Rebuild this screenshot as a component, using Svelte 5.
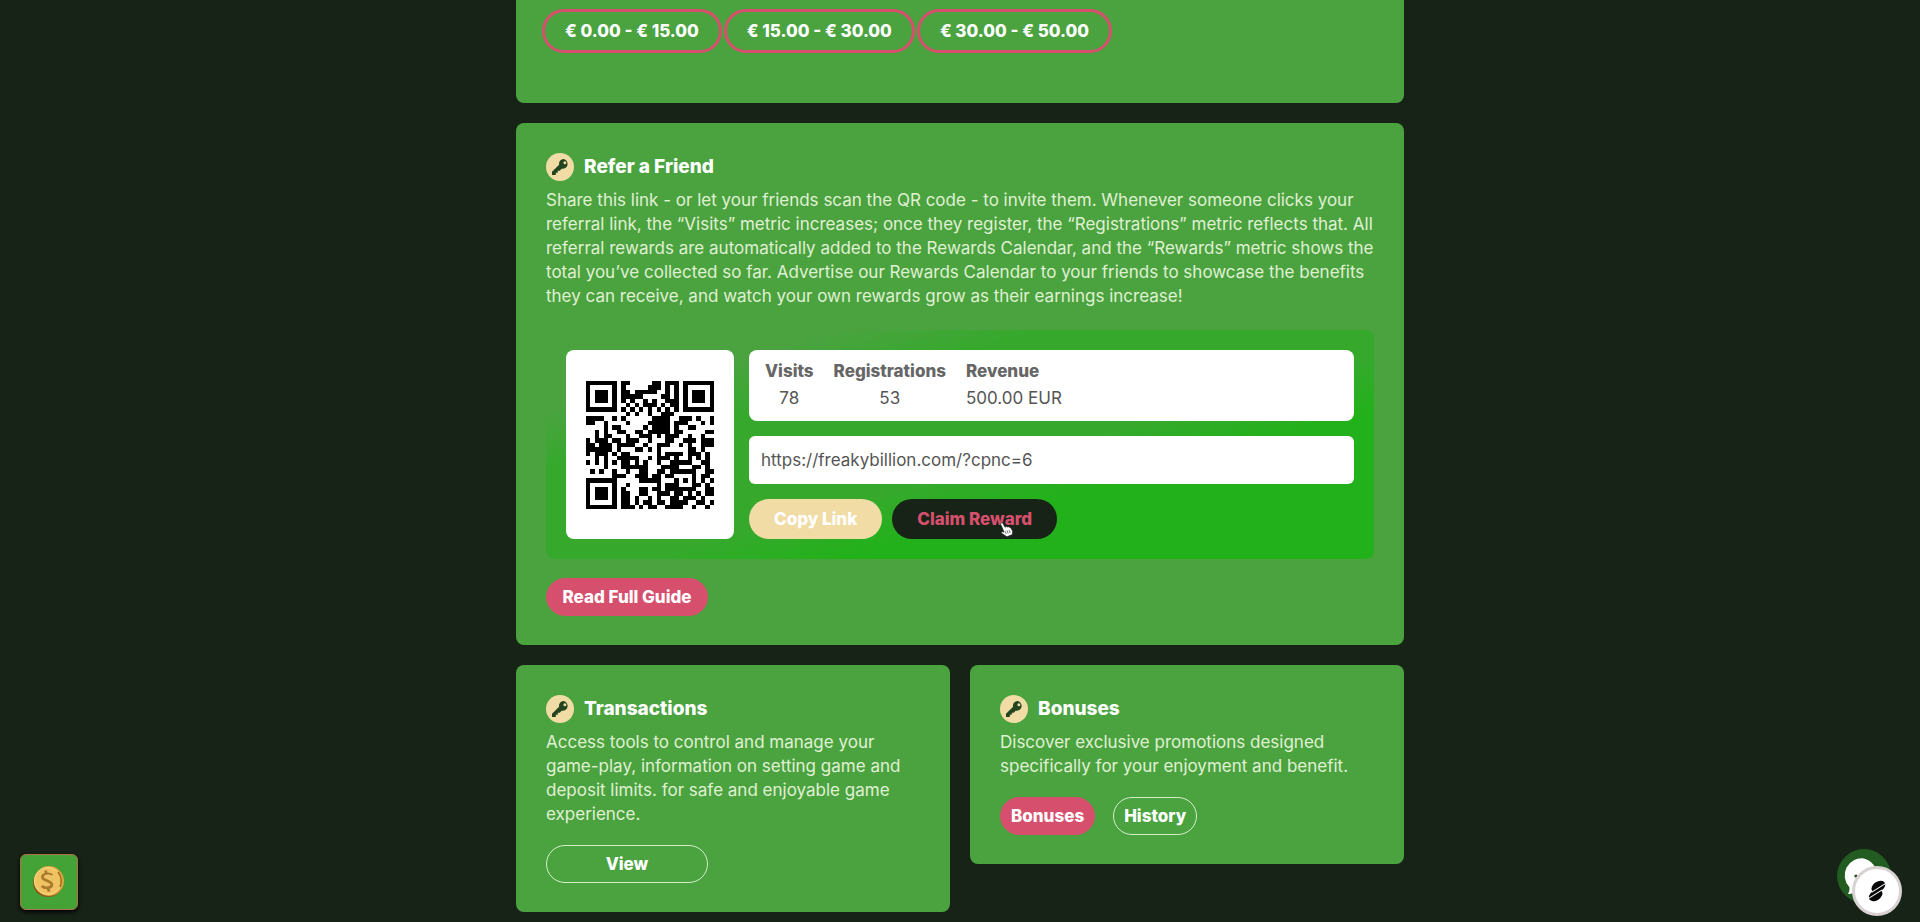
<script>
  const ranges = ['€ 0.00 - € 15.00', '€ 15.00 - € 30.00', '€ 30.00 - € 50.00'];
  let link = $state('https://freakybillion.com/?cpnc=6');

  const modules = [
    'XXXXXXX.XX.....XX.XXX.XXXXXXX',
    'X.....X.X.....XXX.X.X.X.....X',
    'X.XXX.X.XX.XXXXX..X.X.X.XXX.X',
    'X.XXX.X.XXXXX....XX.X.X.XXX.X',
    'X.XXX.X.X.X..X.X..XXX.X.XXX.X',
    'X.....X..X.X.XXX.X.XX.X.....X',
    'XXXXXXX.X.X.X.X.X.X.X.XXXXXXX',
    '.........X.X..X..XXX.........',
    'XXXX..X.X......XXXX..XXX.X..X',
    'XX..X....X....XXXXX.XXX...X.X',
    '....X.XX.....X.XXXX.X..XX....',
    '..X.X..XX..XX.XXXXX.XX.....XX',
    '..X.XX...X..XXX.X.XXX..X..X..',
    'X.XXX.XX.XXX..X...XX..XXX.XXX',
    'XX.XXX.XXXX..X..XXX..X.X..XXX',
    'XXXXXX.X...XX.X.X......XX.X..',
    'X.XXX.X.XX......X.XXXX.XXX.X.',
    '..X.X..XXXXX..X.XXX.X..X.X.X.',
    'X.X.X.X.XX.X.X..X..XXXXX..XX.',
    '....X...XXXXXX...XXXX...XX.X.',
    '.X.X..X..X..XX..XX.XXXXXX..XX',
    '......XXX..XXX.XX.XX....X.XX.',
    'XXXXXXX.....XXXXX...X.X.X.X.X',
    'X.....X..X......X.XXX...XX.X.',
    'X.XXX.X.X...XX.XX.XXXXXXX..XX',
    'X.XXX.X.XX..XX..XXX.XX.X.X.XX',
    'X.XXX.X.XX.X..X.X..XX.XXX.X..',
    'X.....X.XX.X.XX.XX.XXXX..XX.X',
    'XXXXXXX.XXX.X.XX..XXXX..X..X.',
  ];
  const qrPath = modules
    .flatMap((row, y) => [...row].map((cell, x) => (cell === 'X' ? `M${x} ${y}h1v1h-1z` : '')))
    .join('');
</script>

{#snippet heading(text)}
  <h2>
    <svg class="key" viewBox="0 0 28 28" aria-hidden="true">
      <circle cx="14" cy="14" r="14" fill="#f0dca4" />
      <path
        fill="#22451f"
        fill-rule="evenodd"
        d="M17.7 6a4.7 4.7 0 0 0-4.600 5.800L6 18.700V22h3.800v-2.200h2v-2.100h2l1.800-2a4.800 4.800 0 1 0 2.100-9.700zm1.200 2.200a1.500 1.500 0 1 1 0 3 1.500 1.500 0 0 1 0-3z"
      />
    </svg>
    {text}
  </h2>
{/snippet}

<main>
  <section class="card ranges">
    {#each ranges as range}
      <button class="range">{range}</button>
    {/each}
  </section>

  <section class="card">
    {@render heading('Refer a Friend')}
    <p>
      Share this link - or let your friends scan the QR code - to invite them. Whenever someone clicks your<br />
      referral link, the “Visits” metric increases; once they register, the “Registrations” metric reflects that. All<br />
      referral rewards are automatically added to the Rewards Calendar, and the “Rewards” metric shows the<br />
      total you’ve collected so far. Advertise our Rewards Calendar to your friends to showcase the benefits<br />
      they can receive, and watch your own rewards grow as their earnings increase!
    </p>

    <div class="panel">
      <div class="qr">
        <svg viewBox="0 0 29 29" role="img" aria-label="QR code" shape-rendering="crispEdges">
          <path d={qrPath} fill="#000" />
        </svg>
      </div>
      <div class="details">
        <div class="stats">
          <table>
            <thead>
              <tr><th scope="col">Visits</th><th scope="col">Registrations</th><th scope="col">Revenue</th></tr>
            </thead>
            <tbody>
              <tr><td>78</td><td>53</td><td>500.00 EUR</td></tr>
            </tbody>
          </table>
        </div>
        <input type="text" aria-label="Referral link" bind:value={link} />
        <div class="actions">
          <button class="copy">Copy Link</button>
          <button class="claim">
            Claim Reward
            <svg class="pointer" viewBox="0 0 14 16" aria-hidden="true">
              <path
                d="M1.200 1c.7-.5 1.500-.1 1.900.6l2 3.600.9-.6c.6-.3 1.200 0 1.500.4.6-.5 1.300-.3 1.700.3.6-.3 1.300 0 1.600.6l1.900 3.300-.3 3.400-5.500 2.200-5.300-3.600c-.7-.6-.1-1.800 1-1.500l1.500.4L.7 2.500C.4 1.900.7 1.300 1.200 1z"
                fill="#fff" stroke="#222" stroke-width=".7"
              />
              <path d="M7 8.400l1.200 3M9 7.900l1.200 3M5.200 9.200l1 2.600" stroke="#333" stroke-width=".7" />
            </svg>
          </button>
        </div>
      </div>
    </div>

    <div class="row"><button class="pink wide">Read Full Guide</button></div>
  </section>

  <div class="pair">
    <section class="card">
      {@render heading('Transactions')}
      <p>
        Access tools to control and manage your<br />
        game-play, information on setting game and<br />
        deposit limits. for safe and enjoyable game<br />
        experience.
      </p>
      <div class="row"><button class="outline wide">View</button></div>
    </section>
    <section class="card">
      {@render heading('Bonuses')}
      <p>
        Discover exclusive promotions designed<br />
        specifically for your enjoyment and benefit.
      </p>
      <div class="row"><button class="pink">Bonuses</button><button class="outline">History</button></div>
    </section>
  </div>
</main>

<button class="coin" aria-label="Coins">
  <svg viewBox="0 0 34 34" aria-hidden="true">
    <ellipse cx="16" cy="18" rx="15" ry="14" fill="#8a5a1c" />
    <circle cx="17" cy="16" r="15" fill="#dfa53a" />
    <circle cx="16" cy="16" r="13.600" fill="#efc362" stroke="#f8dc8c" />
    <path d="M26 7a15 15 0 0 1 2 15" fill="none" stroke="#9c6a22" stroke-width="1.500" />
    <path
      d="M20 10.500c-2.400-2.600-8.600-2-9.500 1-1 4.600 9.800 3.800 9.400 8.300-.5 3.800-7.600 3.900-10 1M13.600 5.500l.7 3M16.200 23.500l.8 3.200"
      fill="none" stroke="#a87a2c" stroke-width="2.800"
    />
    <path d="M20 11.500c-2.600-2.300-7.400-1.800-8 .8" fill="none" stroke="#f6d880" />
  </svg>
</button>

<button class="chat" aria-label="Open chat">
  <svg viewBox="0 0 54 54" aria-hidden="true">
    <circle cx="27" cy="27" r="27" fill="#225c20" />
    <path d="M27 9.500a17 17 0 0 1 0 33c-4 1-8 .5-11 1.500-2 .7-4 1.500-5 .8 1-1.500 2-4.500 1.300-6.800A17 17 0 0 1 27 9.500z" fill="#fff" />
    <circle cx="19" cy="27" r="1.600" fill="#22451f" />
  </svg>
</button>
<button class="badge" aria-label="Open tools">
  <svg viewBox="0 0 50 50" aria-hidden="true">
    <circle cx="25" cy="25" r="23.500" fill="#fff" stroke="#d9d2d2" stroke-width="3" />
    <g transform="rotate(-32 25 25)">
      <ellipse cx="28.500" cy="22" rx="7.500" ry="5" fill="#080808" />
      <ellipse cx="21.500" cy="28" rx="7.500" ry="5" fill="#080808" />
      <path d="M20 23.200h16M14 26.800h16" stroke="#fff" stroke-width="1.100" />
    </g>
  </svg>
</button>

<style>
  :global(body) {
    background: #172317;
    font-family: 'Inter', sans-serif;
    font-size: 17px;
  }
  main {
    box-sizing: border-box;
    max-width: 888px;
    margin: 0 auto;
    display: flex;
    flex-direction: column;
    gap: 20px;
  }
  .card {
    box-sizing: border-box;
    background: #4aa33f;
    border-radius: 8px;
    padding: 30px 30px 29px;
    color: #fff;
  }
  .ranges {
    display: flex;
    gap: 2px;
    padding: 9px 26px 50px;
    border-radius: 0 0 8px 8px;
  }
  button {
    font: 800 17px/24px 'Inter', sans-serif;
    color: #fff;
    border: 0;
    background: none;
    padding: 0;
    cursor: pointer;
    white-space: nowrap;
  }
  .range {
    height: 44px;
    padding: 0 20px;
    border: 3px solid #d6506e;
    border-radius: 22px;
  }
  h2 {
    display: flex;
    align-items: center;
    gap: 10px;
    margin: 0 0 7px;
    font: 800 19px/28px 'Inter', sans-serif;
  }
  .key {
    width: 28px;
    height: 28px;
  }
  p {
    margin: 0;
    line-height: 24px;
    color: #e0f0d4;
    white-space: nowrap;
  }
  .panel {
    margin-top: 22px;
    padding: 20px;
    border-radius: 8px;
    display: flex;
    gap: 15px;
    background: linear-gradient(to bottom right, #4aa33f 18%, #36a92d 30%, #36a92d 56%, #22b11a 68%);
  }
  .qr {
    flex: none;
    width: 168px;
    background: #fff;
    border-radius: 8px;
    display: grid;
    place-items: center;
  }
  .qr svg {
    width: 128px;
    height: 128px;
  }
  .details {
    flex: 1;
    display: flex;
    flex-direction: column;
    gap: 15px;
    min-width: 0;
  }
  .stats {
    background: #fff;
    border-radius: 8px;
    padding: 8px 16px 9px;
    color: #555;
  }
  table {
    border-collapse: collapse;
  }
  th,
  td {
    padding: 0 20px 0 0;
    line-height: 27px;
    text-align: center;
  }
  th {
    font-weight: 800;
    color: #666;
  }
  th:last-child,
  td:last-child {
    padding-right: 0;
    text-align: left;
  }
  input {
    box-sizing: border-box;
    width: 100%;
    height: 48px;
    padding: 0 12px;
    border: 0;
    border-radius: 6px;
    background: #fff;
    color: #555;
    font: 17px/24px 'Inter', sans-serif;
  }
  .actions {
    display: flex;
    gap: 10px;
  }
  .actions button {
    height: 40px;
    padding: 0 25px;
    border-radius: 20px;
  }
  .actions .copy {
    background: #f0dca4;
  }
  .actions .claim {
    position: relative;
    background: #172317;
    color: #d6506e;
  }
  .pointer {
    position: absolute;
    width: 14px;
    height: 16px;
    left: 108px;
    top: 23px;
  }
  .row {
    display: flex;
    gap: 18px;
    margin-top: 19px;
  }
  .pink,
  .outline {
    box-sizing: border-box;
    height: 38px;
    padding: 0 10px;
    border: 1px solid #d6506e;
    border-radius: 19px;
  }
  .pink {
    background: #d6506e;
  }
  .outline {
    border-color: #d5efcc;
  }
  .wide {
    min-width: 162px;
  }
  .pair {
    display: grid;
    grid-template-columns: 1fr 1fr;
    gap: 20px;
    align-items: start;
  }
  .coin {
    position: fixed;
    left: 20px;
    bottom: 12px;
    width: 58px;
    height: 56px;
    display: grid;
    place-items: center;
    background: #43a337;
    border: 1px solid #b0704a;
    border-radius: 6px;
    box-shadow: 0 2px 4px #000;
  }
  .coin svg {
    width: 34px;
    height: 34px;
  }
  .chat,
  .badge {
    position: fixed;
    display: flex;
  }
  .chat {
    right: 29px;
    bottom: 19px;
    width: 54px;
    height: 54px;
  }
  .badge {
    right: 18px;
    bottom: 6px;
    width: 50px;
    height: 50px;
  }
  .chat svg,
  .badge svg {
    width: 100%;
    height: 100%;
  }
</style>
